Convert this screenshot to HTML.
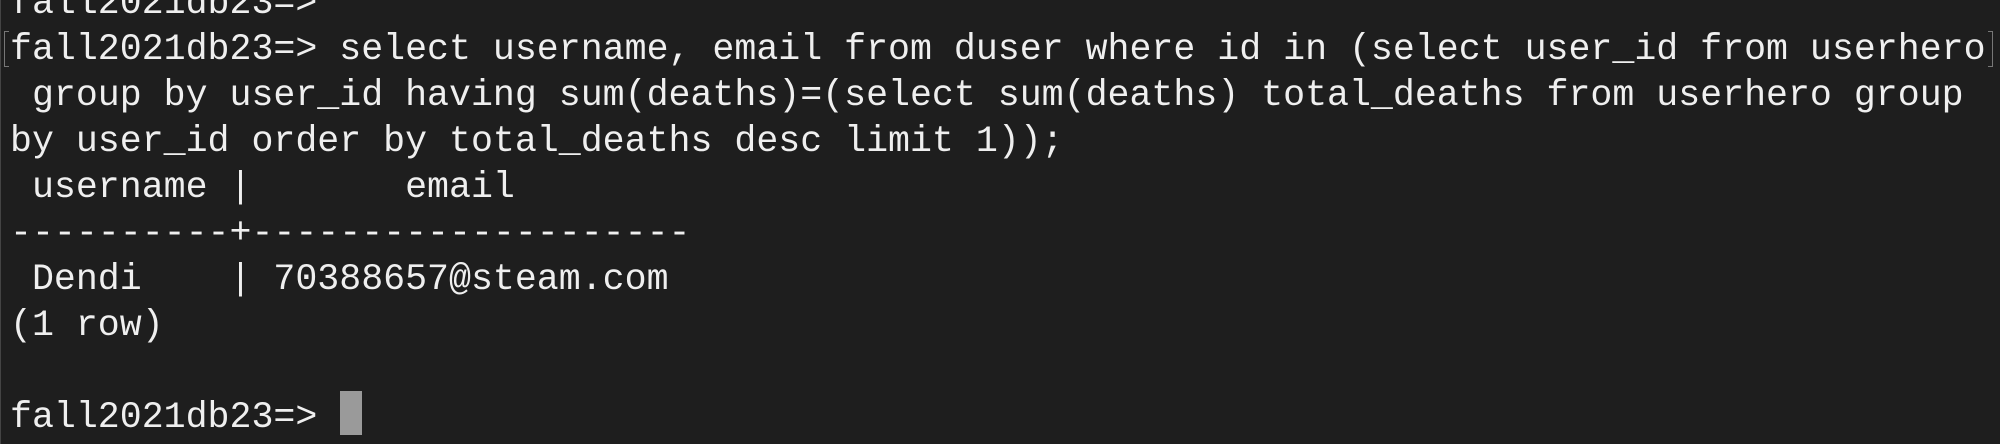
<!DOCTYPE html>
<html><head><meta charset="utf-8"><style>
html,body{margin:0;padding:0;width:2000px;height:444px;overflow:hidden;background:#1e1e1e;}
#t{position:absolute;left:10px;top:-19px;margin:0;font-family:"Liberation Mono",monospace;font-size:36.6px;line-height:46px;color:#efefef;white-space:pre;}
.cur{position:absolute;left:340px;top:391px;width:22px;height:44px;background:#9a9a9a;}
.bl{position:absolute;left:4px;top:31px;width:4px;height:34px;border:1px solid #777;border-right:none;}
.br{position:absolute;left:1988px;top:31px;width:4px;height:34px;border:1px solid #777;border-left:none;}
.edge{position:absolute;left:0;top:0;width:1px;height:444px;background:#444;}
</style></head><body>
<div class="edge"></div>
<pre id="t">fall2021db23=&gt;
fall2021db23=&gt; select username, email from duser where id in (select user_id from userhero
 group by user_id having sum(deaths)=(select sum(deaths) total_deaths from userhero group
by user_id order by total_deaths desc limit 1));
 username |       email
----------+--------------------
 Dendi    | 70388657@steam.com
(1 row)

fall2021db23=&gt; </pre>
<div class="bl"></div><div class="br"></div>
<div class="cur"></div>
</body></html>
